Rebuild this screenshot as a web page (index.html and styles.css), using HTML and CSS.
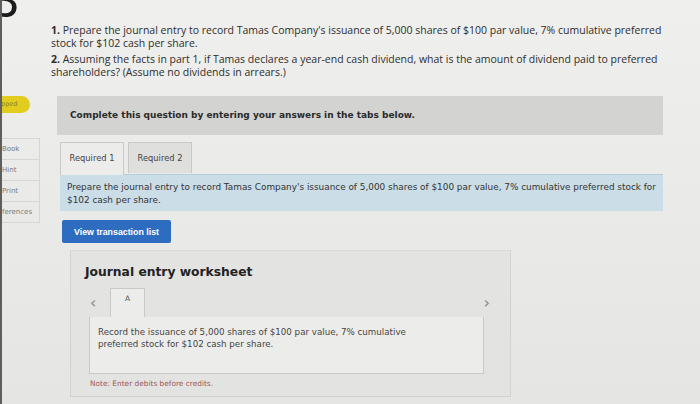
FILE: index.html
```html
<!DOCTYPE html>
<html lang="en">
<head>
    <meta charset="UTF-8">
    <title>Journal entry worksheet</title>
    <link rel="stylesheet" href="styles.css">
</head>
<body>
<div class="qnum">3</div>
<div class="page">
    <div class="side">
        <div class="pill">pped</div>
        <div class="side-links">
            <div class="side-link">Book</div>
            <div class="side-link">Hint</div>
            <div class="side-link">Print</div>
            <div class="side-link">ferences</div>
        </div>
    </div>
    <div class="main">
        <div class="question">
            <p><b>1.</b> Prepare the journal entry to record Tamas Company's issuance of 5,000 shares of $100 par value, 7% cumulative preferred stock for $102 cash per share.</p>
            <p><b>2.</b> Assuming the facts in part 1, if Tamas declares a year-end cash dividend, what is the amount of dividend paid to preferred shareholders? (Assume no dividends in arrears.)</p>
        </div>
        <div class="banner">Complete this question by entering your answers in the tabs below.</div>
        <div class="tabs">
            <div class="tab active">Required 1</div>
            <div class="tab">Required 2</div>
        </div>
        <div class="instructions">Prepare the journal entry to record Tamas Company's issuance of 5,000 shares of $100 par value, 7% cumulative preferred stock for $102 cash per share.</div>
        <button class="view-btn">View transaction list</button>
        <div class="worksheet">
            <h2>Journal entry worksheet</h2>
            <div class="ws-nav">
                <span class="arrow">&lsaquo;</span>
                <div class="ws-tab">A</div>
                <span class="arrow next">&rsaquo;</span>
            </div>
            <div class="ws-box"><p>Record the issuance of 5,000 shares of $100 par value, 7% cumulative preferred stock for $102 cash per share.</p></div>
            <div class="note">Note: Enter debits before credits.</div>
        </div>
    </div>
</div>
</body>
</html>
```
FILE: styles.css
```css
body {
    margin: 0;
    background: linear-gradient(180deg, #efefed 0%, #e9e9e7 60%, #e5e5e3 100%);
    border-left: 2px solid #5e5e5e;
    height: 404px;
    overflow: hidden;
    color: #333;
    font-family: "DejaVu Sans", Verdana, sans-serif;
}
.qnum {
    height: 21px;
    overflow: hidden;
    font-family: "Liberation Sans", Arial, sans-serif;
    font-size: 50px;
    line-height: 1;
    margin-left: -11px;
    color: #1c1c1c;
}
.qnum::before {
    content: "";
    display: block;
    margin-top: -25px;
}
.page {
    display: flex;
}
.side {
    width: 38px;
    padding-top: 75px;
}
.pill {
    width: 30px;
    height: 17px;
    margin-left: -2px;
    background: #e2cd1f;
    border-radius: 0 9px 9px 0;
    font-size: 6.5px;
    line-height: 17px;
    color: #8a7d2a;
    text-indent: 1px;
}
.side-links {
    margin-top: 25px;
    margin-left: -2px;
}
.side-link {
    height: 20px;
    border: 1px solid #d6d6d4;
    border-top: none;
    border-left: none;
    font-size: 7px;
    line-height: 20px;
    color: #7a7a7a;
    padding-left: 2px;
}
.side-link:first-child {
    border-top: 1px solid #d6d6d4;
}
.main {
    flex: 1;
    padding-left: 11px;
}
.question {
    width: 615px;
    margin-top: 3px;
    font-family: "Open Sans", Lato, sans-serif;
    font-size: 10.5px;
    line-height: 13px;
    color: #2e2e2e;
}
.question p {
    margin: 0 0 3px;
}
.banner {
    margin: 17px 37px 0 6px;
    height: 39px;
    background: #d3d3d1;
    font-weight: bold;
    font-size: 9px;
    line-height: 39px;
    padding-left: 13px;
    color: #2a2a2a;
}
.tabs {
    display: flex;
    gap: 4px;
    margin: 7px 0 0 9px;
    height: 32px;
    align-items: flex-start;
}
.tab {
    width: 62px;
    height: 30px;
    border: 1px solid #c9c9c7;
    border-bottom: none;
    background: #dfdfdd;
    font-size: 8.3px;
    line-height: 31px;
    text-align: center;
    color: #444;
}
.tab.active {
    height: 32px;
    background: #ececea;
}
.instructions {
    margin: 0 37px 0 9px;
    height: 37px;
    box-sizing: border-box;
    background: #cbdde6;
    border-top: 1px solid #b9cbd4;
    padding: 6px 0 0 7px;
    font-size: 8.9px;
    line-height: 13px;
    color: #333;
}
.view-btn {
    display: block;
    margin: 9px 0 0 11px;
    width: 109px;
    height: 23px;
    border: none;
    border-radius: 2px;
    background: #2d6cbf;
    color: #fff;
    font-family: "Liberation Sans", Arial, sans-serif;
    font-weight: bold;
    font-size: 8.8px;
    padding: 0;
}
.worksheet {
    margin: 7px 0 0 19px;
    width: 441px;
    height: 147px;
    box-sizing: border-box;
    border: 1px solid #d2d2d0;
    border-top-color: #dadad8;
    background: #e3e3e1;
    padding: 13px 17px 0 14px;
}
.worksheet h2 {
    margin: 0;
    font-size: 12.3px;
    line-height: 16px;
    color: #222;
}
.ws-nav {
    display: flex;
    align-items: flex-end;
    margin-top: 8px;
    height: 29px;
    padding-left: 3px;
}
.arrow {
    font-size: 16px;
    line-height: 16px;
    color: #8a8a8a;
    width: 20px;
    padding-left: 2px;
    align-self: center;
}
.arrow.next {
    margin-left: auto;
    width: auto;
    padding: 0 3px 0 0;
}
.ws-tab {
    width: 33px;
    height: 28px;
    border: 1px solid #c9c9c7;
    border-bottom: none;
    background: #ececea;
    font-size: 7.5px;
    line-height: 20px;
    text-align: center;
    color: #555;
}
.ws-box {
    width: 395px;
    height: 57px;
    box-sizing: border-box;
    border: 1px solid #c9c9c7;
    border-top: none;
    background: #ececea;
    margin-left: 4px;
    padding: 9px 8px 0 8px;
    font-size: 8.7px;
    line-height: 12px;
    color: #444;
}
.ws-box p {
    margin: 0;
    width: 330px;
}
.note {
    margin: 5px 0 0 5px;
    font-size: 7.4px;
    color: #a0575a;
}
```
